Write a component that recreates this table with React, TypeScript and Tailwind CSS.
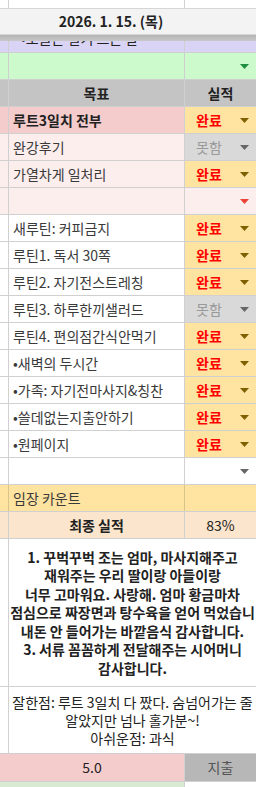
import React from 'react';

type Status = 'done' | 'fail' | 'none';

type Row = {
  goal: string;
  bold?: boolean;
  rowBg: string;
  status: Status;
  arrow: 'brown' | 'gray' | 'red' | 'green';
};

const FONT = { fontFamily: '"Noto Sans CJK KR", "Noto Sans", sans-serif' };

const rows: Row[] = [
  { goal: '루트3일치 전부', bold: true, rowBg: 'bg-[#f4cccc]', status: 'done', arrow: 'brown' },
  { goal: '완강후기', rowBg: 'bg-[#fdeeee]', status: 'fail', arrow: 'gray' },
  { goal: '가열차게 일처리', rowBg: 'bg-[#fdeeee]', status: 'done', arrow: 'brown' },
  { goal: '', rowBg: 'bg-[#fdeeee]', status: 'none', arrow: 'red' },
  { goal: '새루틴: 커피금지', rowBg: 'bg-white', status: 'done', arrow: 'brown' },
  { goal: '루틴1. 독서 30쪽', rowBg: 'bg-white', status: 'done', arrow: 'brown' },
  { goal: '루틴2. 자기전스트레칭', rowBg: 'bg-white', status: 'done', arrow: 'brown' },
  { goal: '루틴3. 하루한끼샐러드', rowBg: 'bg-white', status: 'fail', arrow: 'gray' },
  { goal: '루틴4. 편의점간식안먹기', rowBg: 'bg-white', status: 'done', arrow: 'brown' },
  { goal: '•새벽의 두시간', rowBg: 'bg-white', status: 'done', arrow: 'brown' },
  { goal: '•가족: 자기전마사지&칭찬', rowBg: 'bg-white', status: 'done', arrow: 'brown' },
  { goal: '•쓸데없는지출안하기', rowBg: 'bg-white', status: 'done', arrow: 'brown' },
  { goal: '•원페이지', rowBg: 'bg-white', status: 'done', arrow: 'brown' },
  { goal: '', rowBg: 'bg-white', status: 'none', arrow: 'gray' },
];

function Arrow({ color }: { color: string }) {
  const fill =
    color === 'brown' ? '#7f6000' : color === 'red' ? '#ea4335' : color === 'green' ? '#1e8e3e' : '#666666';
  return (
    <svg width="9" height="5" viewBox="0 0 9 5">
      <polygon points="0,0 9,0 4.5,5" fill={fill} />
    </svg>
  );
}

function StatusCell({ status, arrow }: { status: Status; arrow: Row['arrow'] }) {
  const bg = status === 'done' ? 'bg-[#ffe3a1]' : status === 'fail' ? 'bg-[#d9d9d9]' : '';
  return (
    <div className={`w-[71px] h-full flex items-center justify-between pl-[11px] pr-[7px] ${bg}`}>
      {status === 'done' && <span className="text-[14px] font-bold text-[#ff0000]">완료</span>}
      {status === 'fail' && <span className="text-[14px] text-[#9a9a9a]">못함</span>}
      {status === 'none' && <span />}
      <Arrow color={arrow} />
    </div>
  );
}

export default function App() {
  return (
    <div className="w-[256px] h-[787px] overflow-hidden bg-white text-[#222]" style={FONT}>
      {/* top sliver */}
      <div className="flex h-[8px]">
        <div className="w-[9px] border-r border-[#d0d0d0]" />
        <div className="w-[176px] border-r border-[#d0d0d0]" />
        <div className="flex-1" />
      </div>

      {/* frozen date bar */}
      <div className="h-[27px] bg-[#f3f3f3] border-y border-[#d6d6d6] flex items-center justify-center pr-[34px]">
        <span className="text-[14px] font-bold text-[#222]">2026. 1. 15. (목)</span>
      </div>
      <div className="h-[6px] bg-gradient-to-b from-[#b4b4b4] to-[#c8c8c8]" />

      {/* purple row, scrolled under the frozen bar */}
      <div className="h-[12px] overflow-hidden flex flex-col justify-end bg-[#d9d3f5] border-b border-[#cfcfcf]">
        <div className="flex h-[27px] shrink-0">
          <div className="w-[9px] border-r border-[#cfcfcf]" />
          <div className="w-[176px] border-r border-[#cfcfcf] flex items-center pl-[12px] text-[14px]">
            •오늘은 일기 쓰는 날
          </div>
          <div className="flex-1" />
        </div>
      </div>

      {/* green row */}
      <div className="flex h-[27px] bg-[#ccfacc] border-b border-[#cfcfcf]">
        <div className="w-[9px] border-r border-[#cfcfcf]" />
        <div className="w-[176px] border-r border-[#cfcfcf]" />
        <div className="flex-1 flex items-center justify-end pr-[7px]">
          <Arrow color="green" />
        </div>
      </div>

      {/* header row */}
      <div className="flex h-[27px] bg-[#c4c4c4] border-b border-[#d0d0d0] text-[14px] font-bold">
        <div className="w-[9px] border-r border-[#d0d0d0]" />
        <div className="w-[176px] border-r border-[#d0d0d0] flex items-center justify-center">목표</div>
        <div className="flex-1 flex items-center justify-center">실적</div>
      </div>

      {rows.map((r, i) => (
        <div key={i} className={`flex h-[27px] border-b border-[#d0d0d0] ${r.rowBg}`}>
          <div className="w-[9px] border-r border-[#d0d0d0]" />
          <div
            className={`w-[176px] border-r border-[#d0d0d0] flex items-center pl-[4px] text-[14px] whitespace-nowrap overflow-hidden ${
              r.bold ? 'font-bold text-[#222]' : 'text-[#3a3a3a]'
            }`}
          >
            {r.goal}
          </div>
          <StatusCell status={r.status} arrow={r.arrow} />
        </div>
      ))}

      {/* 임장 카운트 */}
      <div className="flex h-[27px] border-b border-[#d0d0d0] bg-[#ffe3a1]">
        <div className="w-[9px] border-r border-[#d8c48a]" />
        <div className="w-[176px] border-r border-[#d8c48a] flex items-center pl-[4px] text-[14px] text-[#3a3a3a]">
          임장 카운트
        </div>
        <div className="flex-1" />
      </div>

      {/* 최종 실적 */}
      <div className="flex h-[27px] border-b border-[#d0d0d0] bg-[#fce5cd]">
        <div className="w-[9px] border-r border-[#d0d0d0]" />
        <div className="w-[176px] border-r border-[#d0d0d0] flex items-center justify-center text-[14px] font-bold">
          최종 실적
        </div>
        <div className="flex-1 flex items-center justify-center text-[14px]">83%</div>
      </div>

      {/* gratitude text */}
      <div className="flex h-[148px] border-b border-[#d0d0d0]">
        <div className="w-[9px] border-r border-[#d0d0d0]" />
        <div className="w-[247px] flex flex-col items-center justify-center text-[14px] leading-[18.5px] font-semibold text-[#222] whitespace-nowrap">
          <span>1. 꾸벅꾸벅 조는 엄마, 마사지해주고</span>
          <span>재워주는 우리 딸이랑 아들이랑</span>
          <span>너무 고마워요. 사랑해. 엄마 황금마차</span>
          <span>점심으로 짜장면과 탕수육을 얻어 먹었습니</span>
          <span>내돈 안 들어가는 바깥음식 감사합니다.</span>
          <span>3. 서류 꼼꼼하게 전달해주는 시어머니</span>
          <span>감사합니다.</span>
        </div>
      </div>

      {/* review */}
      <div className="flex h-[67px] border-b border-[#d0d0d0]">
        <div className="w-[9px] border-r border-[#d0d0d0]" />
        <div className="w-[247px] flex flex-col items-center justify-center text-[14px] leading-[18px] text-[#222] whitespace-nowrap">
          <span>잘한점: 루트 3일치 다 짰다. 숨넘어가는 줄</span>
          <span>알았지만 넘나 홀가분~!</span>
          <span>아쉬운점: 과식</span>
        </div>
      </div>

      {/* score */}
      <div className="flex h-[28px] border-b border-[#d0d0d0]">
        <div className="w-[185px] bg-[#f4cccc] border-r border-[#d0d0d0] flex items-center justify-center text-[14px]">
          5.0
        </div>
        <div className="flex-1 bg-[#b7b7b7] flex items-center justify-center text-[14px] text-[#555]">지출</div>
      </div>

      <div className="flex h-[10px]">
        <div className="w-[185px] bg-[#d9ead3] border-r border-[#d0d0d0]" />
        <div className="flex-1 bg-white" />
      </div>
    </div>
  );
}
